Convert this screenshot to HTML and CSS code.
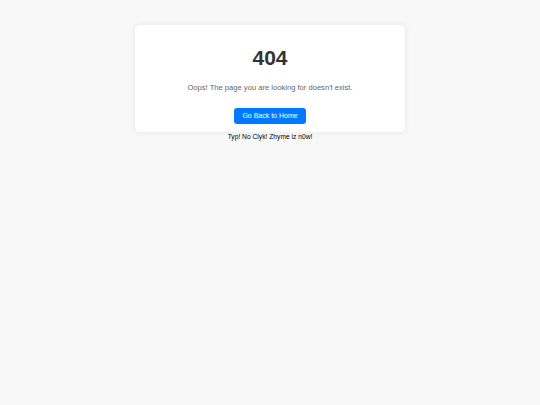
FILE: index.html
```html
<!DOCTYPE html>
<html lang="en">
<head>
<meta charset="utf-8">
<title>404</title>
<link rel="stylesheet" href="styles.css">
</head>
<body>
<div class="card">
  <h1 class="code">404</h1>
  <p class="msg">Oops! The page you are looking for doesn't exist.</p>
  <a class="btn" href="#">Go Back to Home</a>
</div>
<p class="tagline">Typ! No Clyk! Zhyme iz n0w!</p>
</body>
</html>
```
FILE: styles.css
```css
html, body {
  margin: 0;
  padding: 0;
}
body {
  background: #f8f8f8;
  font-family: "Liberation Sans", Arial, sans-serif;
  padding-top: 25px;
  height: 405px;
  box-sizing: border-box;
}
.card {
  width: 270px;
  margin: 0 auto;
  background: #fff;
  border-radius: 5px;
  box-shadow: 0 0 6px rgba(0, 0, 0, 0.08);
  box-sizing: border-box;
  padding: 21px 10px 8px;
  text-align: center;
}
.code {
  margin: 0;
  font-size: 21px;
  line-height: 24px;
  font-weight: bold;
  color: #333;
}
.msg {
  margin: 13px 0 0;
  font-size: 7.6px;
  line-height: 10px;
  color: #666;
}
.btn {
  display: inline-block;
  margin-top: 15px;
  height: 16px;
  line-height: 16px;
  padding: 0 8px;
  background: #007bff;
  color: #fff;
  font-size: 7px;
  text-decoration: none;
  border-radius: 3px;
}
.tagline {
  margin: 0;
  text-align: center;
  font-size: 6.7px;
  line-height: 9px;
  color: #000;
}
```
